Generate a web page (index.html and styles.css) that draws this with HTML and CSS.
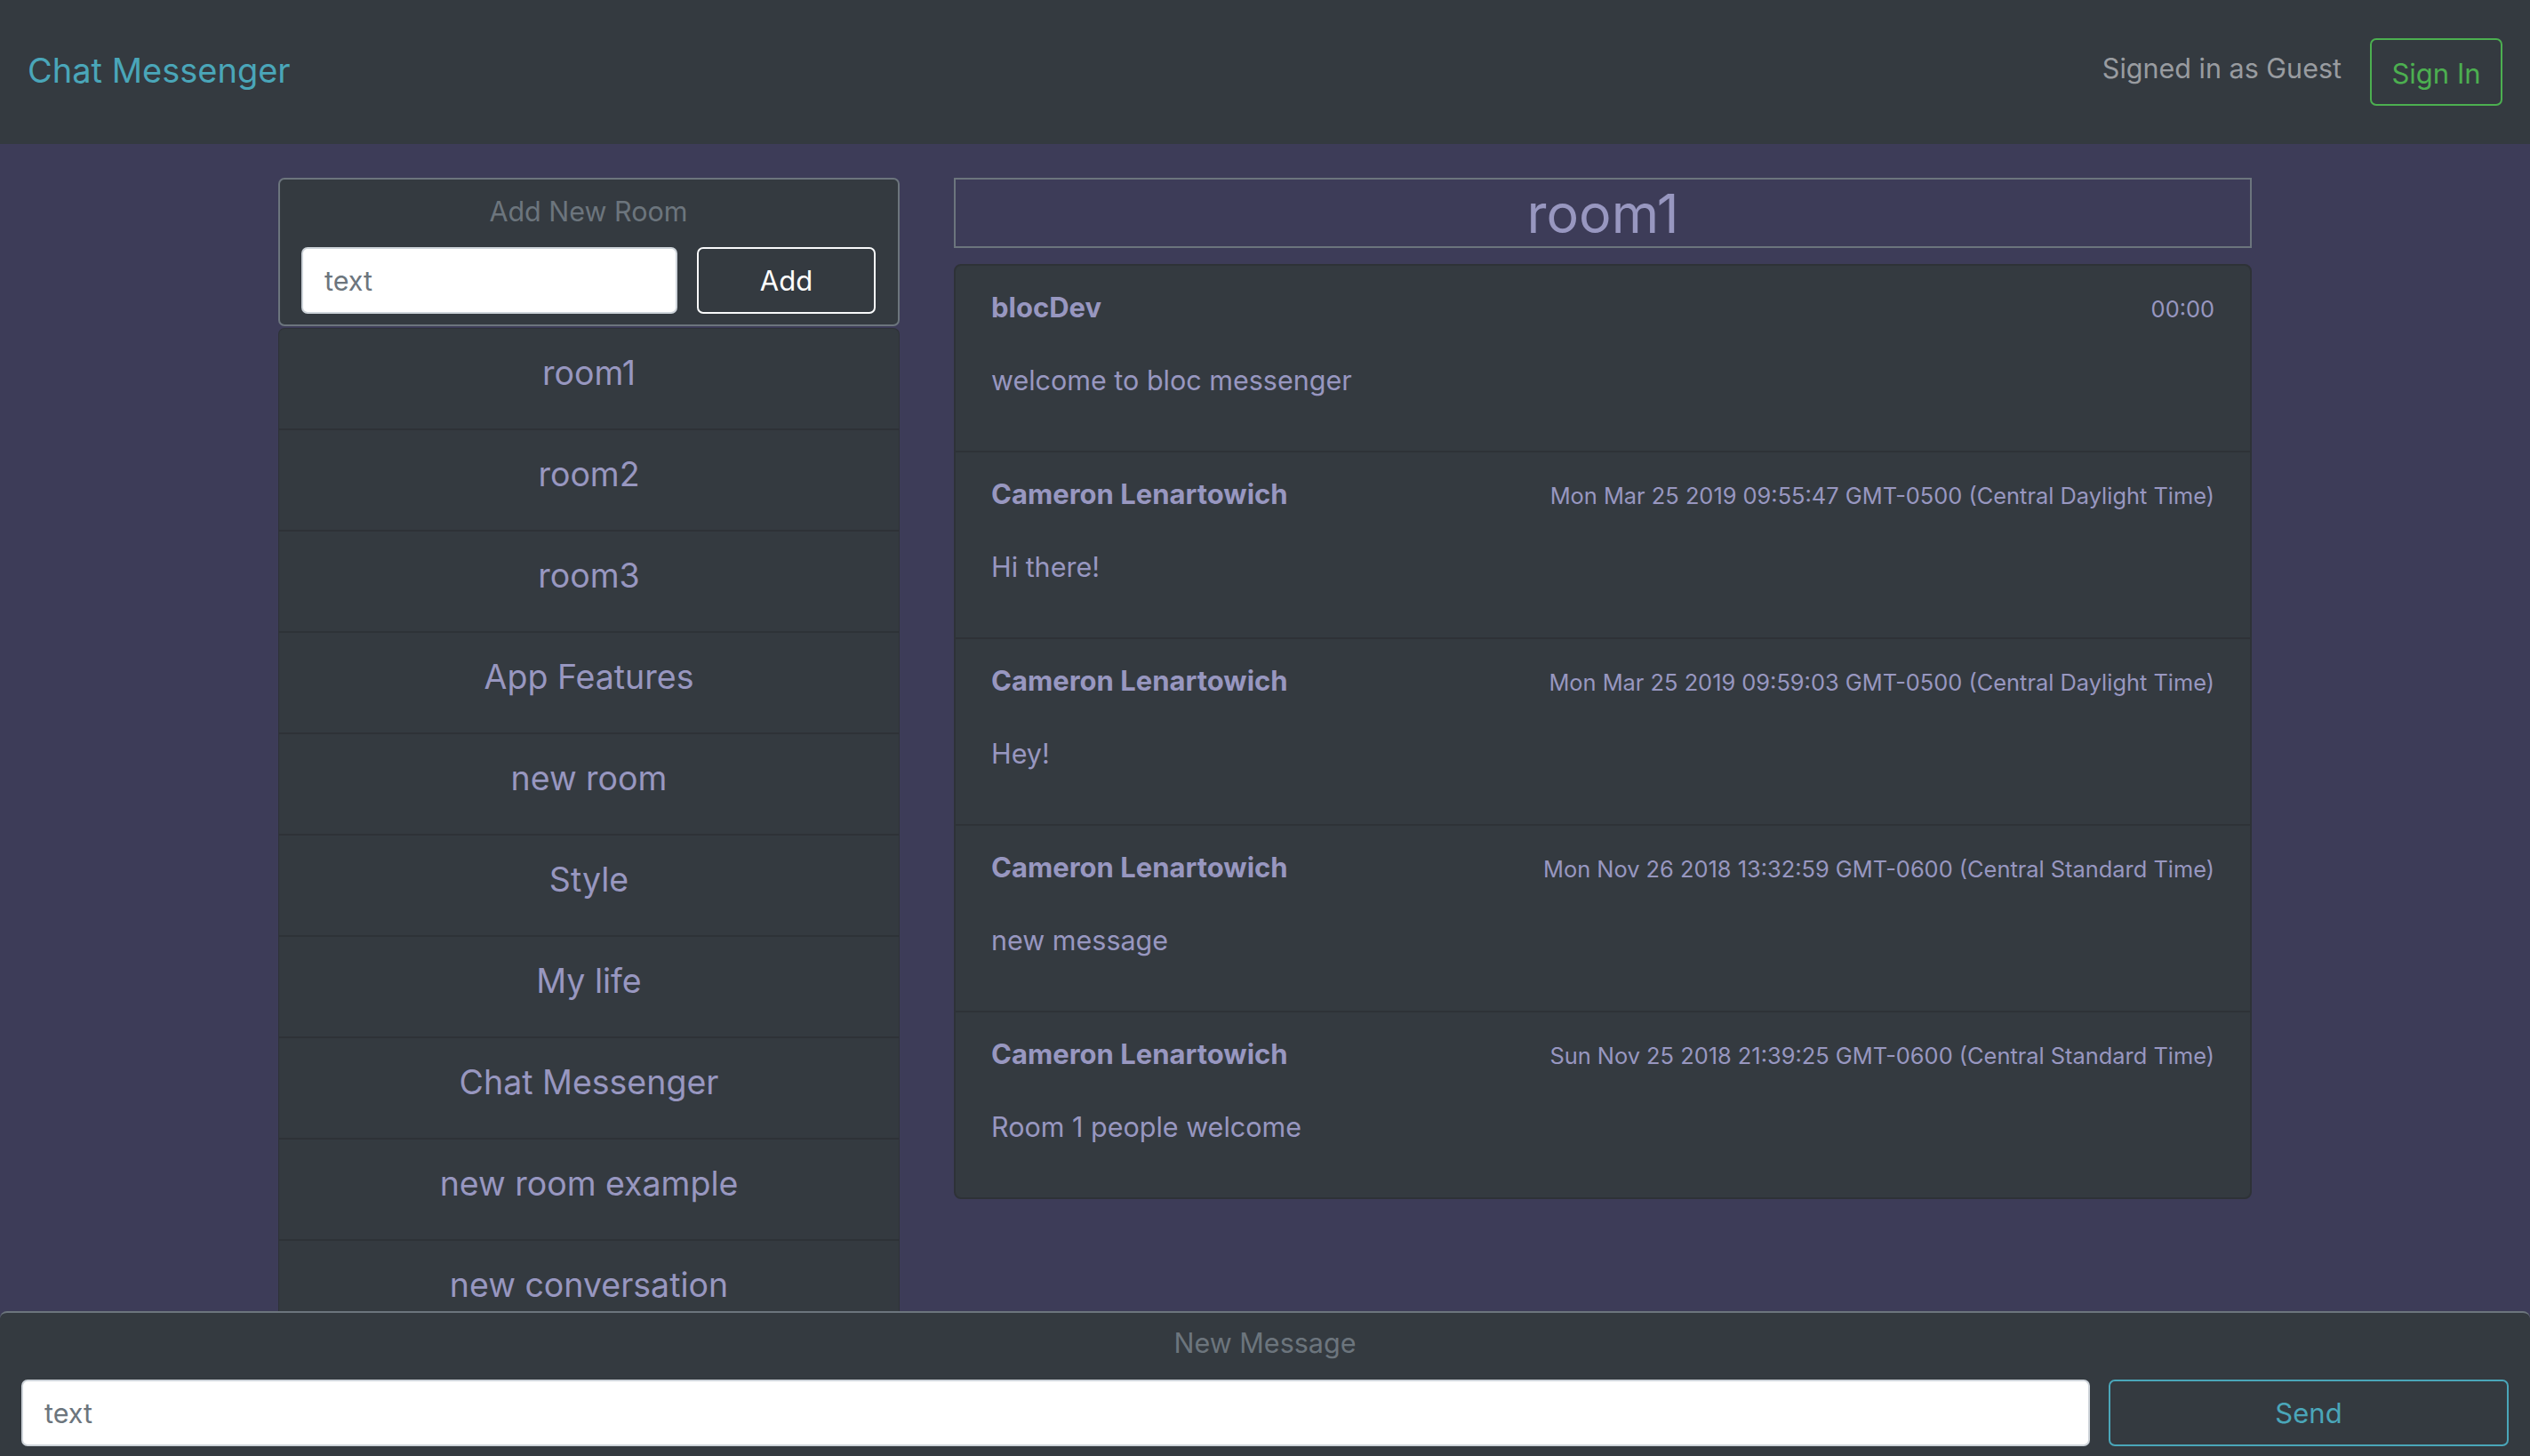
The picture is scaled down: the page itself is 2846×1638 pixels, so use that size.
FILE: index.html
```html
<!DOCTYPE html>
<html lang="en">
<head>
<meta charset="utf-8">
<title>Chat Messenger</title>
<link rel="stylesheet" href="styles.css">
</head>
<body>
<header class="navbar">
  <span class="brand">Chat Messenger</span>
  <div class="user-area">
    <span class="signed-in">Signed in as Guest</span>
    <button class="btn btn-signin">Sign In</button>
  </div>
</header>
<main class="main">
  <div class="container">
    <aside class="sidebar">
      <div class="add-card">
        <div class="add-title">Add New Room</div>
        <div class="add-row">
          <input class="text-input room-input" type="text" placeholder="text">
          <button class="btn btn-add">Add</button>
        </div>
      </div>
      <ul class="room-list">
        <li class="room-item">room1</li>
        <li class="room-item">room2</li>
        <li class="room-item">room3</li>
        <li class="room-item">App Features</li>
        <li class="room-item">new room</li>
        <li class="room-item">Style</li>
        <li class="room-item">My life</li>
        <li class="room-item">Chat Messenger</li>
        <li class="room-item">new room example</li>
        <li class="room-item">new conversation</li>
      </ul>
    </aside>
    <section class="chat">
      <h2 class="room-title">room1</h2>
      <div class="messages">
        <div class="message">
          <div class="msg-head"><span class="msg-user">blocDev</span><span class="msg-time">00:00</span></div>
          <div class="msg-text">welcome to bloc messenger</div>
        </div>
        <div class="message">
          <div class="msg-head"><span class="msg-user">Cameron Lenartowich</span><span class="msg-time">Mon Mar 25 2019 09:55:47 GMT-0500 (Central Daylight Time)</span></div>
          <div class="msg-text">Hi there!</div>
        </div>
        <div class="message">
          <div class="msg-head"><span class="msg-user">Cameron Lenartowich</span><span class="msg-time">Mon Mar 25 2019 09:59:03 GMT-0500 (Central Daylight Time)</span></div>
          <div class="msg-text">Hey!</div>
        </div>
        <div class="message">
          <div class="msg-head"><span class="msg-user">Cameron Lenartowich</span><span class="msg-time">Mon Nov 26 2018 13:32:59 GMT-0600 (Central Standard Time)</span></div>
          <div class="msg-text">new message</div>
        </div>
        <div class="message">
          <div class="msg-head"><span class="msg-user">Cameron Lenartowich</span><span class="msg-time">Sun Nov 25 2018 21:39:25 GMT-0600 (Central Standard Time)</span></div>
          <div class="msg-text">Room 1 people welcome</div>
        </div>
      </div>
    </section>
  </div>
</main>
<footer class="composer">
  <div class="composer-title">New Message</div>
  <div class="composer-row">
    <input class="text-input msg-input" type="text" placeholder="text">
    <button class="btn btn-send">Send</button>
  </div>
</footer>
</body>
</html>
```
FILE: styles.css
```css
* { box-sizing: border-box; }
html, body { margin: 0; padding: 0; }
body {
  height: 100vh;
  display: flex;
  flex-direction: column;
  overflow: hidden;
  background: #3d3c58;
  font-family: Inter, "Noto Sans", "DejaVu Sans", sans-serif;
  font-size: 30px;
  color: #9897c0;
}
.navbar {
  flex: 0 0 162px;
  background: #343a40;
  display: flex;
  align-items: center;
  justify-content: space-between;
  padding: 0 31px;
}
.brand {
  font-size: 38px;
  color: #4aa6b9;
  line-height: 1;
  margin-top: -4px;
}
.user-area {
  display: flex;
  align-items: center;
  gap: 32px;
}
.signed-in {
  font-size: 30.5px;
  color: #999ca0;
  margin-top: -10px;
}
.btn {
  font-family: inherit;
  background: transparent;
  border-radius: 7px;
  cursor: pointer;
  padding: 0;
}
.btn-signin {
  width: 149px;
  height: 76px;
  border: 2px solid #4caf50;
  color: #4caf50;
  font-size: 31px;
  padding-top: 3px;
}
.main {
  flex: 1 1 auto;
  overflow: hidden;
  padding-top: 38px;
}
.container {
  width: 2220px;
  margin: 0 auto;
  display: grid;
  grid-template-columns: 699px 1fr;
  column-gap: 61px;
  align-items: start;
}
.add-card {
  height: 167px;
  background: #343a40;
  border: 2px solid #6c757d;
  border-radius: 7px;
  padding: 14px 25px 0 24px;
}
.add-title {
  text-align: center;
  color: #6c757d;
  font-size: 30.5px;
  line-height: 44px;
}
.add-row {
  margin-top: 18px;
  display: flex;
  gap: 22px;
}
.text-input {
  height: 75px;
  background: #fff;
  border: 2px solid #ced4da;
  border-radius: 7px;
  font-family: inherit;
  font-size: 30.5px;
  color: #495057;
  padding: 0 24px;
  outline: none;
}
.text-input::placeholder { color: #6c757d; }
.room-input { flex: 0 0 423px; width: 423px; }
.btn-add {
  flex: 1;
  height: 75px;
  border: 2px solid #f8f9fa;
  color: #fff;
  font-size: 31px;
}
.room-list {
  list-style: none;
  margin: 2px 0 0;
  padding: 0;
  background: #343a40;
  border-radius: 7px 7px 0 0;
  border: 1px solid #2e3237;
  border-bottom: none;
}
.room-item {
  height: 114px;
  padding-top: 28px;
  line-height: 43px;
  text-align: center;
  font-size: 37.5px;
  color: #9897c0;
  border-bottom: 2px solid #2e3237;
}
.room-title {
  margin: 0;
  height: 79px;
  border: 2px solid #6c757d;
  text-align: center;
  font-weight: 400;
  font-size: 61px;
  line-height: 76px;
  color: #9897c0;
}
.messages {
  margin-top: 18px;
  background: #343a40;
  border: 2px solid #2e3237;
  border-radius: 8px;
}
.message {
  height: 210px;
  padding: 25px 40px 0 40px;
  border-top: 2px solid #2e3237;
}
.message:first-child { border-top: none; height: 208px; }
.msg-head {
  display: flex;
  justify-content: space-between;
  align-items: baseline;
  line-height: 44px;
}
.msg-user {
  font-weight: 700;
  font-size: 31px;
}
.msg-time {
  font-size: 25.4px;
}
.msg-text {
  margin-top: 36px;
  line-height: 44px;
  font-size: 30.5px;
}
.composer {
  flex: 0 0 163px;
  background: #343a40;
  border-top: 2px solid #6c757d;
  border-radius: 8px 8px 0 0;
  padding: 12px 24px 0;
}
.composer-title {
  text-align: center;
  color: #6c757d;
  font-size: 30.5px;
  line-height: 44px;
}
.composer-row {
  margin-top: 19px;
  display: flex;
  gap: 21px;
}
.msg-input { flex: 1; }
.btn-send {
  flex: 0 0 450px;
  height: 75px;
  border: 2px solid #4aa6b9;
  color: #4aa6b9;
  font-size: 31px;
}
```
